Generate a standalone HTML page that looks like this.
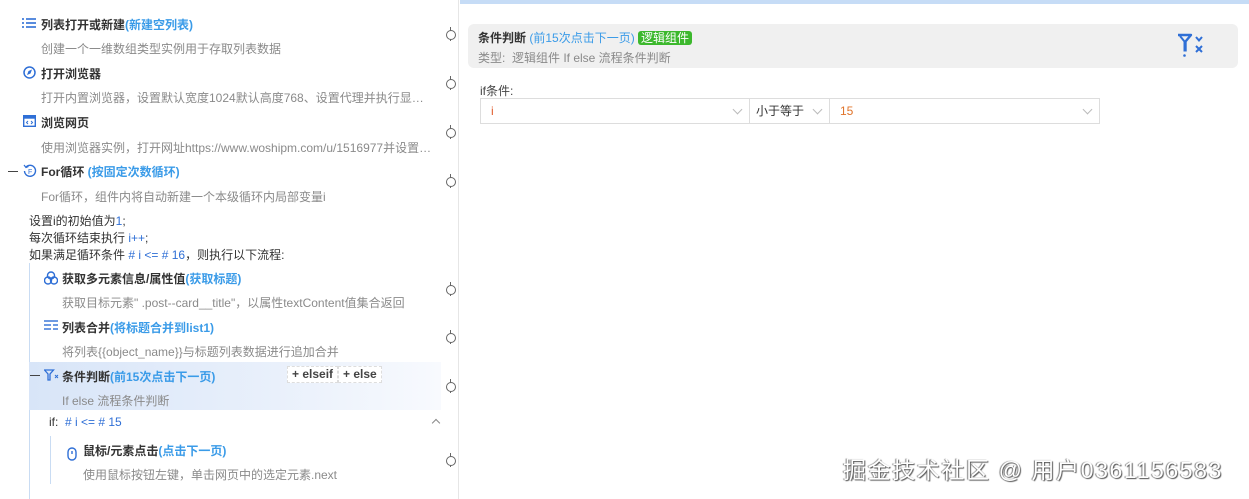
<!DOCTYPE html>
<html><head><meta charset="utf-8"><style>
*{margin:0;padding:0;box-sizing:border-box}
body{width:1249px;height:499px;overflow:hidden;background:#fff;font-family:"Liberation Sans","Noto Sans CJK SC",sans-serif;font-size:12px;color:#333;position:relative}
.a{position:absolute;white-space:nowrap}
.t{font-weight:bold;color:#333;font-size:12px}
.b{color:#3a9be8}
.d{color:#8a8a8a;font-size:12px}
.k{color:#2f6fd6}
.con{position:absolute;width:8px;height:14px}
.con:before{content:"";position:absolute;left:3.5px;top:0;width:1px;height:14px;background:#666}
.con:after{content:"";position:absolute;left:0;top:3px;width:8px;height:8px;border:1px solid #666;border-radius:50%;background:#fff}
.sel{position:absolute;top:98px;height:26px;border:1px solid #ddd;font-size:12px;line-height:24px;padding-left:10px}
.chev{position:absolute;right:8px;top:7px;width:7px;height:7px;border-right:1px solid #bbb;border-bottom:1px solid #bbb;transform:rotate(45deg)}
.btn{position:absolute;top:366px;height:17px;border:1px dashed #ddd;background:#fff;font-size:12px;font-weight:bold;color:#444;line-height:15px;padding:0 4px}
</style></head><body>
<div class="a" style="left:458px;top:0;width:1px;height:499px;background:#e6e6e6"></div>
<div class="a" style="left:460px;top:0;width:789px;height:4px;background:#c6dcf6"></div>

<svg class="a" style="left:22px;top:17px" width="14" height="13"><g stroke="#2f6fd6" stroke-width="1.6"><line x1="0" y1="2" x2="2" y2="2"/><line x1="4" y1="2" x2="14" y2="2"/><line x1="0" y1="6" x2="2" y2="6"/><line x1="4" y1="6" x2="14" y2="6"/><line x1="0" y1="10" x2="2" y2="10"/><line x1="4" y1="10" x2="14" y2="10"/></g></svg>
<div class="a t" style="left:41px;top:16px">列表打开或新建<span class="b">(新建空列表)</span></div>
<div class="a d" style="left:41px;top:40px">创建一个一维数组类型实例用于存取列表数据</div>
<div class="con" style="left:446px;top:27px"></div>

<svg class="a" style="left:23px;top:66px" width="13" height="13"><circle cx="6.5" cy="6.5" r="5.5" fill="none" stroke="#2f6fd6" stroke-width="1.5"/><path d="M4 9l1.5-4 3.5-1.5-1.5 4z" fill="#2f6fd6"/></svg>
<div class="a t" style="left:41px;top:65px">打开浏览器</div>
<div class="a d" style="left:41px;top:89px">打开内置浏览器，设置默认宽度1024默认高度768、设置代理并执行显…</div>
<div class="con" style="left:446px;top:76px"></div>

<svg class="a" style="left:23px;top:115px" width="13" height="12"><rect x="0.7" y="0.7" width="11.6" height="10.6" fill="none" stroke="#2f6fd6" stroke-width="1.4"/><rect x="0.7" y="0.7" width="11.6" height="3" fill="#2f6fd6"/><path d="M5 6l-1.5 1.5L5 9M8 6l1.5 1.5L8 9" stroke="#2f6fd6" fill="none"/></svg>
<div class="a t" style="left:41px;top:114px">浏览网页</div>
<div class="a d" style="left:41px;top:139px">使用浏览器实例，打开网址https://www.woshipm.com/u/1516977并设置…</div>
<div class="con" style="left:446px;top:125px"></div>

<div class="a" style="left:8px;top:171px;width:10px;height:1px;background:#444"></div>
<svg class="a" style="left:23px;top:164px" width="14" height="14"><path d="M3 3A5.5 5.5 0 1 1 1.5 7" fill="none" stroke="#2f6fd6" stroke-width="1.4"/><path d="M1 1l2 2.5 2.5-1" fill="none" stroke="#2f6fd6" stroke-width="1.2"/><text x="5" y="10" font-size="7" fill="#2f6fd6" font-family="Liberation Sans">F</text></svg>
<div class="a t" style="left:41px;top:163px">For循环 <span class="b">(按固定次数循环)</span></div>
<div class="a d" style="left:41px;top:188px">For循环，组件内将自动新建一个本级循环内局部变量i</div>
<div class="con" style="left:446px;top:174px"></div>

<div class="a" style="left:29px;top:213px;line-height:17px;color:#333">设置i的初始值为<span class="k">1</span>;<br>每次循环结束执行 <span class="k">i++</span>;<br>如果满足循环条件 <span class="k"># i &lt;= # 16</span>，则执行以下流程:</div>
<div class="a" style="left:29px;top:263px;width:1px;height:236px;background:#c9dcf3"></div>

<svg class="a" style="left:44px;top:271px" width="14" height="14"><g fill="none" stroke="#2f6fd6" stroke-width="1.4"><circle cx="7" cy="4.5" r="3.5"/><circle cx="4" cy="9.5" r="3.5"/><circle cx="10" cy="9.5" r="3.5"/></g></svg>
<div class="a t" style="left:62px;top:270px">获取多元素信息/属性值<span class="b">(获取标题)</span></div>
<div class="a d" style="left:62px;top:294px">获取目标元素" .post--card__title"，以属性textContent值集合返回</div>
<div class="con" style="left:446px;top:282px"></div>

<svg class="a" style="left:44px;top:320px" width="14" height="12"><g stroke="#2f6fd6" stroke-width="1.4"><line x1="0" y1="1" x2="14" y2="1"/><line x1="0" y1="5" x2="7" y2="5"/><line x1="9" y1="5" x2="14" y2="5"/><line x1="0" y1="9" x2="7" y2="9"/><line x1="9" y1="9" x2="14" y2="9"/></g></svg>
<div class="a t" style="left:62px;top:319px">列表合并<span class="b">(将标题合并到list1)</span></div>
<div class="a d" style="left:62px;top:343px">将列表{{object_name}}与标题列表数据进行追加合并</div>
<div class="con" style="left:446px;top:330px"></div>

<div class="a" style="left:29px;top:362px;width:412px;height:48px;background:linear-gradient(90deg,#d8e5f8,#e9f0fb 60%,#f8fafe)"></div>
<div class="a" style="left:30px;top:375px;width:10px;height:1px;background:#444"></div>
<svg class="a" style="left:44px;top:369px" width="16" height="12"><path d="M0.5 1h9L6 5v6H4V5z" fill="none" stroke="#2f6fd6" stroke-width="1.3"/><path d="M11 6l3 3M14 6l-3 3" stroke="#2f6fd6"/></svg>
<div class="a t" style="left:62px;top:368px">条件判断<span class="b">(前15次点击下一页)</span></div>
<div class="btn" style="left:287px">+ elseif</div>
<div class="btn" style="left:338px">+ else</div>
<div class="a d" style="left:62px;top:392px">If else 流程条件判断</div>
<div class="con" style="left:446px;top:379px"></div>

<div class="a" style="left:49px;top:415px;color:#333">if: <span class="k">&nbsp;# i &lt;= # 15</span></div>
<div class="a" style="left:433px;top:420px;width:6px;height:6px;border-left:1px solid #888;border-top:1px solid #888;transform:rotate(45deg)"></div>
<div class="a" style="left:50px;top:436px;width:1px;height:48px;background:#c9dcf3"></div>
<svg class="a" style="left:67px;top:447px" width="10" height="14"><rect x="1" y="1" width="8" height="12" rx="4" fill="none" stroke="#2f6fd6" stroke-width="1.4"/><line x1="5" y1="4" x2="5" y2="7" stroke="#2f6fd6" stroke-width="1.4"/></svg>
<div class="a t" style="left:83px;top:442px">鼠标/元素点击<span class="b">(点击下一页)</span></div>
<div class="a d" style="left:83px;top:466px">使用鼠标按钮左键，单击网页中的选定元素.next</div>
<div class="con" style="left:446px;top:453px"></div>

<!-- right -->
<div class="a" style="left:468px;top:24px;width:770px;height:44px;background:#f0f0f0;border-radius:6px"></div>
<div class="a t" style="left:478px;top:29px">条件判断 <span class="b" style="font-weight:normal">(前15次点击下一页)</span> <span style="background:#3cb82d;color:#fff;font-weight:normal;padding:0 3px;border-radius:3px">逻辑组件</span></div>
<div class="a d" style="left:478px;top:49px">类型:&nbsp; 逻辑组件 If else 流程条件判断</div>
<svg class="a" style="left:1176px;top:32px" width="34" height="26"><path d="M2 3h13l-5.5 6.5v10" fill="none" stroke="#2f6fd6" stroke-width="2.4" stroke-linejoin="round"/><path d="M4 4l4.5 5.5v10" fill="none" stroke="#2f6fd6" stroke-width="2"/><circle cx="8.5" cy="23.5" r="1.3" fill="#2f6fd6"/><path d="M20 5l3 3.5 3-3.5M20 14l6 6M26 14l-6 6" fill="none" stroke="#2f6fd6" stroke-width="2"/></svg>
<div class="a" style="left:480px;top:82px;color:#444">if条件:</div>
<div class="sel" style="left:480px;width:270px;color:#e05a2b">i<span class="chev"></span></div>
<div class="sel" style="left:749px;width:81px;padding-left:6px;color:#333">小于等于<span class="chev"></span></div>
<div class="sel" style="left:829px;width:271px;color:#e0742b">15<span class="chev"></span></div>

<div class="a" style="left:843px;top:451px;font-size:23px;color:#fff;text-shadow:1px 1px 1px #555,-1px 0 1px #777;letter-spacing:1.6px">掘金技术社区 @ 用户0361156583</div>
</body></html>
